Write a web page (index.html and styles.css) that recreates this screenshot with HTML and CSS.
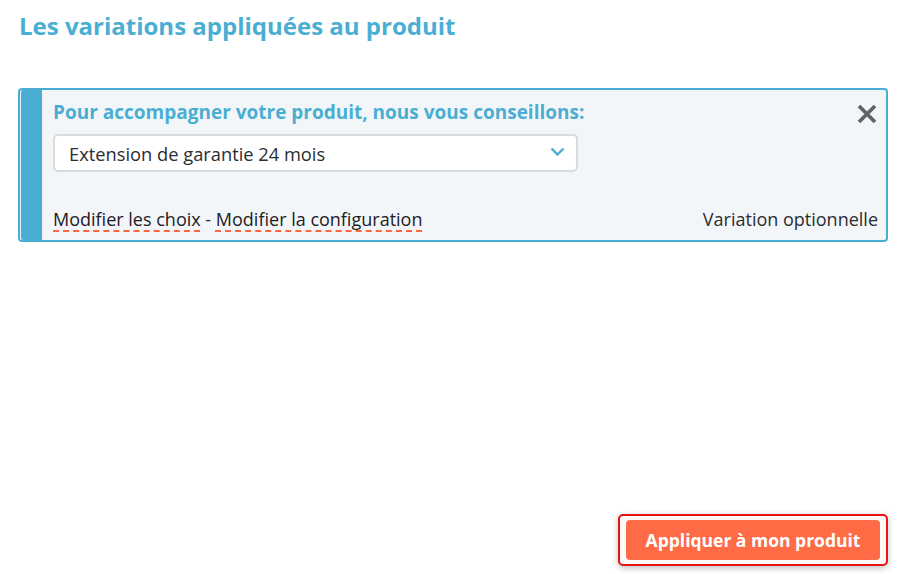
FILE: index.html
```html
<!DOCTYPE html>
<html lang="fr">
<head>
<meta charset="utf-8">
<link rel="stylesheet" href="styles.css">
</head>
<body>
<div class="page">
  <h1 class="title">Les variations appliquées au produit</h1>
  <div class="card">
    <div class="card-bar"></div>
    <div class="card-body">
      <div class="card-head">
        <span class="card-heading">Pour accompagner votre produit, nous vous conseillons:</span>
        <svg class="close" width="20" height="20" viewBox="0 0 20 20"><path d="M2 2 L18 18 M18 2 L2 18" stroke="#60646a" stroke-width="3.8" stroke-linecap="butt"/></svg>
      </div>
      <div class="select">
        <span>Extension de garantie 24 mois</span>
        <svg class="chev" width="15" height="10" viewBox="0 0 15 10"><path d="M1.5 1.5 L7.5 7.5 L13.5 1.5" fill="none" stroke="#4aaed3" stroke-width="2.4"/></svg>
      </div>
      <div class="card-foot">
        <div class="links"><a class="link">Modifier les choix</a> - <a class="link">Modifier la configuration</a></div>
        <span class="opt">Variation optionnelle</span>
      </div>
    </div>
  </div>
  <div class="spacer"></div>
  <div class="actions">
    <div class="btn-ring"><button class="btn">Appliquer à mon produit</button></div>
  </div>
</div>
</body>
</html>
```
FILE: styles.css
```css
* { box-sizing: border-box; }
html, body { margin: 0; padding: 0; background: #fff; }
body { font-family: "Open Sans", Lato, sans-serif; color: #2a2d31; }
.page { width: 908px; height: 574px; padding: 10px 20px 8px 18px; display: flex; flex-direction: column; }
.title { margin: 0 0 0 1px; font-size: 24px; line-height: 32px; font-weight: 700; color: #4aaed3; }
.card { margin-top: 46px; display: flex; border: 2px solid #4aaed3; border-radius: 4px; background: #f3f6f9; height: 154px; overflow: hidden; }
.card-bar { width: 22px; background: #4aaed3; border-left: 1px solid #e8f3f8; border-radius: 3px 0 0 3px; }
.card-body { flex: 1; padding: 10px 8px 0 11px; display: flex; flex-direction: column; }
.card-head { display: flex; justify-content: space-between; align-items: center; height: 24px; }
.card-heading { font-size: 19px; font-weight: 700; color: #4aaed3; }
.close { margin-top: 4px; margin-right: 1px; }
.select { margin-top: 10px; width: 525px; height: 38px; background: #fff; border: 2px solid #d8dcdf; border-radius: 5px; display: flex; align-items: center; justify-content: space-between; padding: 0 11px 0 14px; font-size: 18.3px; color: #2a2d31; }
.chev { margin-top: -2px; }
.card-foot { margin-top: auto; margin-bottom: 9px; display: flex; justify-content: space-between; align-items: baseline; font-size: 18px; }
.links { color: #2a2d31; }
.link { color: #1d2024; text-decoration: underline dashed #ff6640; text-decoration-thickness: 2px; text-underline-offset: 4px; }
.opt { color: #2a2d31; }
.spacer { flex: 1; }
.actions { display: flex; justify-content: flex-end; }
.btn-ring { border: 2px solid #ee1111; border-radius: 5px; padding: 4px 6px; background: #fafafa; box-shadow: 0 2px 6px rgba(0,0,0,0.25); }
.btn { display: block; width: 254px; height: 40px; border: none; border-radius: 4px; background: #ff6b45; color: #fff; font-family: "Open Sans", Lato, sans-serif; font-weight: 700; font-size: 17.5px; padding: 0; }
```
